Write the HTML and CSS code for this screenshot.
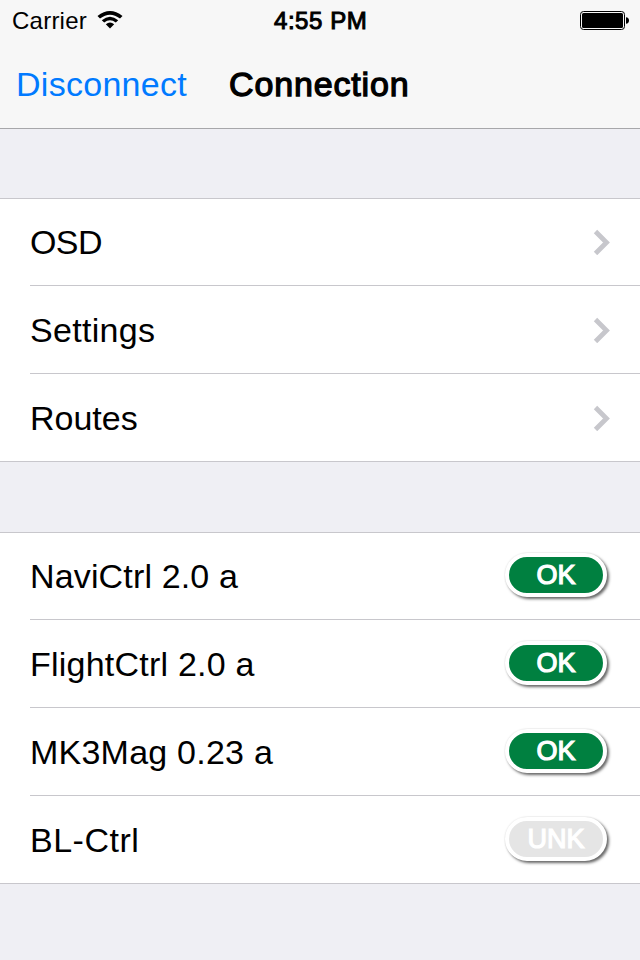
FILE: index.html
```html
<!DOCTYPE html>
<html lang="en">
<head><meta charset="utf-8"><title>Connection</title><link rel="stylesheet" href="styles.css"></head>
<body>
<header>
  <div class="status">
    <div class="carrier"><span>Carrier</span>
      <svg class="wifi" width="26" height="20" viewBox="0 0 26 20"><path d="M.5 6Q13-4 25.5 6L23 8.5Q13 .8 3 8.5ZM4.8 10.2Q13 3.2 21.2 10.2L18.8 12.6Q13 7.8 7.2 12.6ZM8.8 14.3Q13 10.8 17.2 14.3L13 18.5Z"/></svg>
    </div>
    <span class="clock">4:55 PM</span>
    <svg class="battery" width="50" height="20" viewBox="0 0 50 20"><rect x=".5" y=".5" width="44" height="18" rx="3" fill="none" stroke="#000"/><rect x="2" y="2" width="41" height="15" rx="1.5"/><path d="M46 6.3Q49 6.5 49 9.5T46 12.7Z"/></svg>
  </div>
  <nav class="nav"><span class="back">Disconnect</span><span class="title">Connection</span></nav>
</header>
<main>
  <section class="group">
    <div class="row"><span class="osd">OSD</span><svg class="chev" width="18" height="26" viewBox="0 0 18 26"><path d="M2.5 2.5L13.5 13.5 2.5 24.5"/></svg></div>
    <div class="row"><span class="settings">Settings</span><svg class="chev" width="18" height="26" viewBox="0 0 18 26"><path d="M2.5 2.5L13.5 13.5 2.5 24.5"/></svg></div>
    <div class="row"><span class="routes">Routes</span><svg class="chev" width="18" height="26" viewBox="0 0 18 26"><path d="M2.5 2.5L13.5 13.5 2.5 24.5"/></svg></div>
  </section>
  <section class="group devices">
    <div class="row"><span class="navi">NaviCtrl 2.0 a</span><span class="badge">OK</span></div>
    <div class="row"><span class="flight">FlightCtrl 2.0 a</span><span class="badge">OK</span></div>
    <div class="row"><span class="mag">MK3Mag 0.23 a</span><span class="badge">OK</span></div>
    <div class="row"><span class="bl">BL-Ctrl</span><span class="badge unk">UNK</span></div>
  </section>
</main>
</body>
</html>
```
FILE: styles.css
```css
* { box-sizing: border-box; }
body { margin: 0; width: 640px; height: 960px; overflow: hidden; background: #efeff4; color: #000; font-family: "Liberation Sans", Arial, sans-serif; font-size: 34px; white-space: nowrap; }
svg { display: block; flex: none; }
header { height: 129px; background: #f7f7f7; border-bottom: 1px solid #a7a7aa; }
.status { height: 40px; display: grid; grid-template-columns: 274px 1fr 60px; font-size: 24px; line-height: 41px; }
.carrier { display: flex; gap: 10px; padding-left: 12px; letter-spacing: .24px; }
.wifi { margin-top: 10px; }
.clock { letter-spacing: .55px; -webkit-text-stroke: 1px #000; }
.battery { margin-top: 11px; }
.nav { display: flex; height: 88px; padding-left: 16px; gap: 42px; line-height: 89px; }
.back { color: #007aff; letter-spacing: .28px; }
.title { letter-spacing: .85px; -webkit-text-stroke: 1.3px #000; }
.group { background: #fff; margin-top: 69px; border-top: 1px solid #c8c7cc; border-bottom: 1px solid #c8c7cc; }
.devices { margin-top: 70px; }
.row { height: 88px; margin-left: 30px; padding-right: 29px; display: flex; align-items: center; justify-content: space-between; border-bottom: 1px solid #c8c7cc; line-height: 87px; }
.row:first-child { height: 87px; }
.row:last-child { height: 87px; border-bottom: 0; }
.row + .row > span:first-child { padding-top: 2px; }
.osd { letter-spacing: -.6px; }
.settings { letter-spacing: .3px; }
.navi { letter-spacing: .15px; }
.flight { letter-spacing: .22px; }
.mag { letter-spacing: .23px; }
.bl { letter-spacing: .5px; }
.chev path { fill: none; stroke: #c7c7cc; stroke-width: 4.8; }
.badge { width: 102px; height: 44px; margin: -2px 4px 0 0; border: 4px solid #fff; border-radius: 22px; background: #008040; color: #fff; font-size: 27px; line-height: 36px; text-align: center; -webkit-text-stroke: 1.2px #fff; box-shadow: 2px 2px 3px #666, 0 0 2px #ddd; }
.unk { background: #e5e5e5; }
```
